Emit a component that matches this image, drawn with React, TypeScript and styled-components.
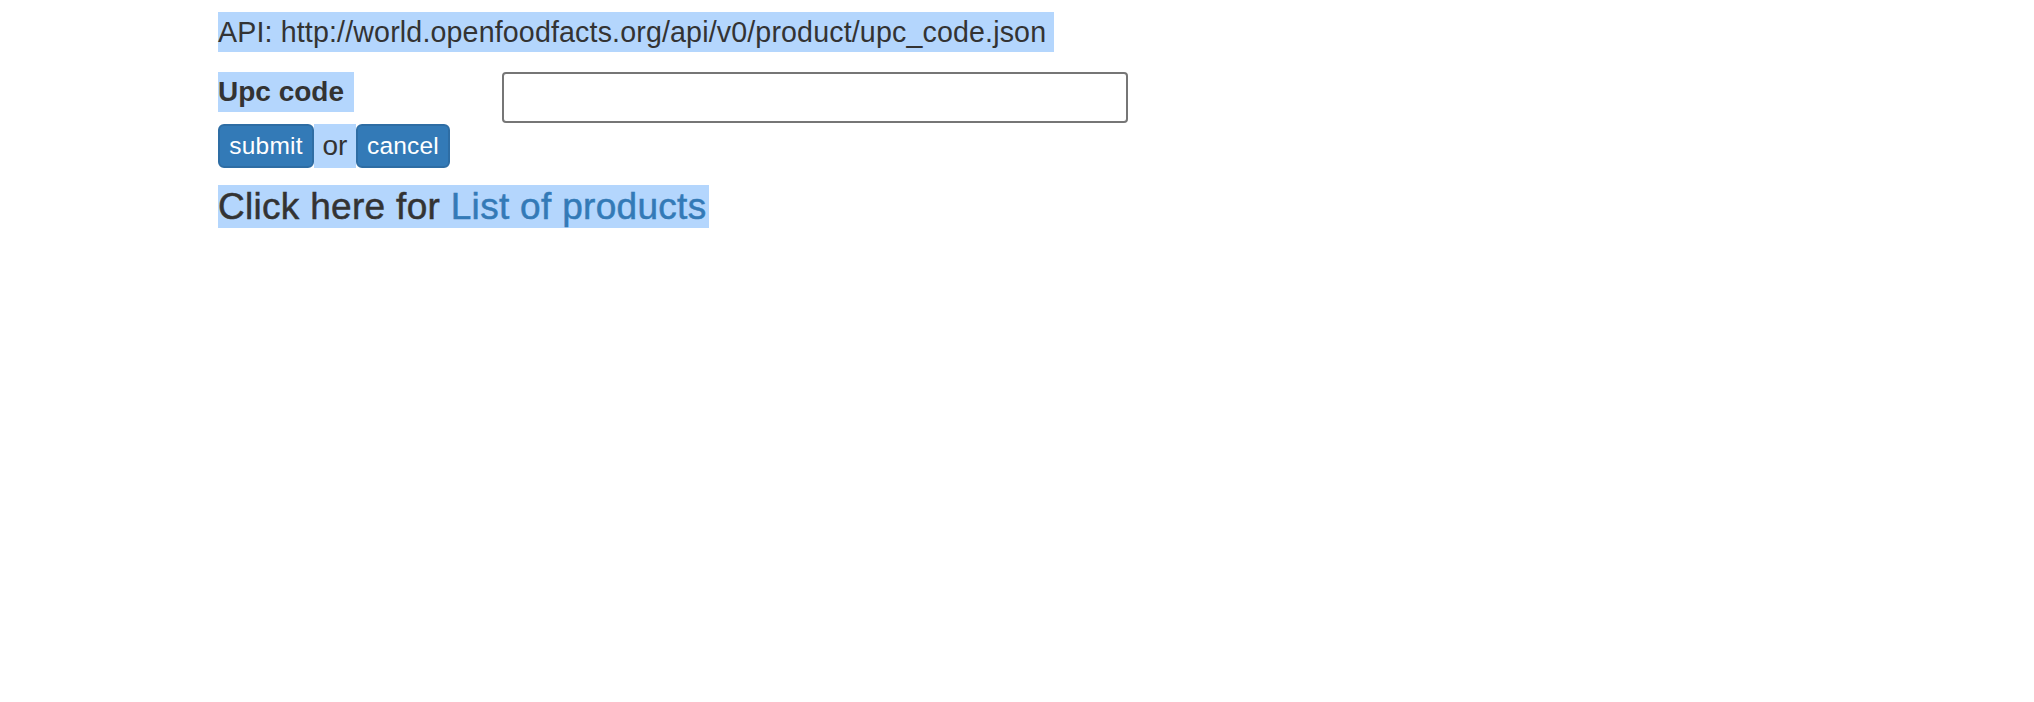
import React from "react";
import styled, { createGlobalStyle } from "styled-components";

const GlobalStyle = createGlobalStyle`
  html, body {
    margin: 0;
    padding: 0;
    background: #ffffff;
  }
  body {
    font-family: "Liberation Sans", Arial, Helvetica, sans-serif;
    color: #333333;
  }
`;

const HIGHLIGHT = "#b4d6fd";

const Page = styled.div`
  padding: 12px 0 0 218px;
  display: flex;
  flex-direction: column;
  align-items: flex-start;
`;

const ApiLine = styled.p`
  margin: 0;
  font-size: 28.6px;
  line-height: 40px;
  letter-spacing: 0.15px;
  background: ${HIGHLIGHT};
  padding-right: 8px;
`;

const FormGrid = styled.form`
  margin-top: 20px;
  display: grid;
  grid-template-columns: 284px 626px;
  grid-template-rows: 51px auto;
  row-gap: 1px;
`;

const Label = styled.label`
  align-self: start;
  font-size: 28px;
  font-weight: 700;
  line-height: 40px;
  width: 136px;
  background: ${HIGHLIGHT};
`;

const Input = styled.input`
  box-sizing: border-box;
  width: 626px;
  height: 51px;
  border: 2px solid #767676;
  border-radius: 4px;
  background: #fff;
  font-size: 28px;
  font-family: inherit;
  padding: 0 6px;
  outline: none;
`;

const Actions = styled.div`
  grid-column: 1 / span 2;
  display: flex;
  align-items: stretch;
  height: 44px;
`;

const Button = styled.button<{ $w: number }>`
  box-sizing: border-box;
  width: ${(p) => p.$w}px;
  height: 44px;
  padding: 0;
  border: 2px solid #2e6da4;
  border-radius: 6px;
  background: #337ab7;
  color: #ffffff;
  font-family: "Liberation Sans", Arial, sans-serif;
  font-size: 24.5px;
  letter-spacing: 0.2px;
  line-height: 40px;
  cursor: pointer;
`;

const Or = styled.span`
  width: 42px;
  display: flex;
  align-items: center;
  justify-content: center;
  font-size: 28px;
  background: ${HIGHLIGHT};
`;

const ClickLine = styled.h4`
  margin: 17px 0 0 0;
  font-size: 37px;
  font-weight: 400;
  letter-spacing: 0.3px;
  line-height: 43px;
  -webkit-text-stroke: 0.5px currentColor;
  background: ${HIGHLIGHT};
  padding-right: 3px;
`;

const Link = styled.a`
  color: #337ab7;
  text-decoration: none;
`;

export default function App() {
  return (
    <>
      <GlobalStyle />
      <Page>
        <ApiLine>API: http://world.openfoodfacts.org/api/v0/product/upc_code.json</ApiLine>
        <FormGrid onSubmit={(e) => e.preventDefault()}>
          <Label htmlFor="upc">Upc code</Label>
          <Input id="upc" type="text" />
          <Actions>
            <Button $w={96} type="submit">submit</Button>
            <Or>or</Or>
            <Button $w={94} type="button">cancel</Button>
          </Actions>
        </FormGrid>
        <ClickLine>
          Click here for <Link href="#">List of products</Link>
        </ClickLine>
      </Page>
    </>
  );
}
